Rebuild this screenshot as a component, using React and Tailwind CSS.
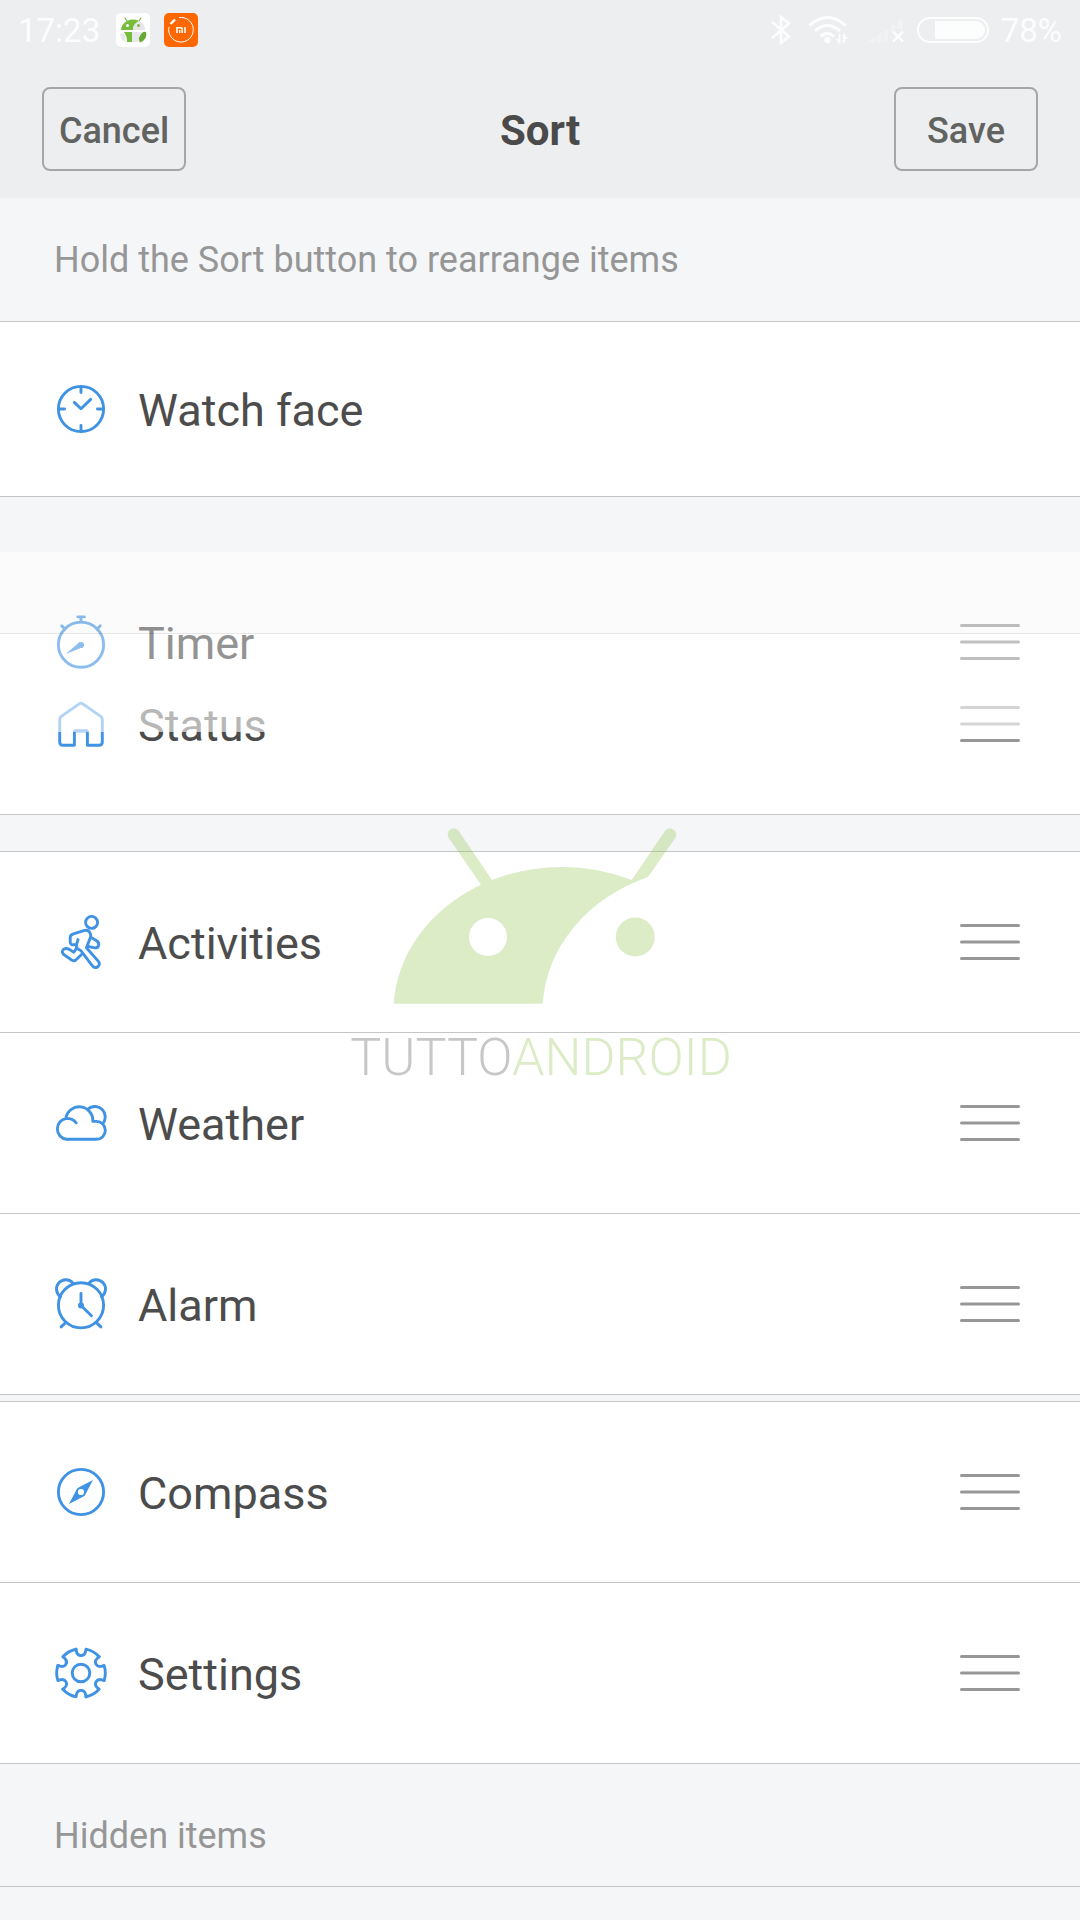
import { useState } from 'react';

function Icon({ children }) {
  return (
    <svg
      viewBox="0 0 54 54"
      fill="none"
      stroke="currentColor"
      strokeWidth="2.9"
      strokeLinecap="round"
      strokeLinejoin="round"
      className="w-[54px] h-[54px] shrink-0 text-[#4092e3]"
      aria-hidden="true"
    >
      {children}
    </svg>
  );
}

const icons = {
  watch: (
    <Icon>
      <circle cx="27" cy="27" r="22.6" />
      <path d="M27 4.5V10.6M27 49.5V43.4M4.5 27H10.6M49.5 27H43.4M20.3 20.4L27 26.8L36.7 17.4" />
    </Icon>
  ),
  timer: (
    <Icon>
      <circle cx="27" cy="29.7" r="22.6" />
      <path d="M23.8 1.9H30.4M27 2V7M7.7 10.8L11 14.3M46.3 10.8L43 14.3" />
      <path d="M11.7 39L25.4 27.2L28.8 32.3Z" fill="currentColor" stroke="none" />
      <circle cx="27" cy="29.9" r="3" fill="currentColor" stroke="none" />
    </Icon>
  ),
  status: (
    <Icon>
      <path d="M20.4 48.3H9q-3.3 0-3.3-3.3V22.5q0-2 1.6-3.1L25.2 6.9q1.8-1.3 3.6 0L46.7 19.4q1.6 1.1 1.6 3.1V45q0 3.3-3.3 3.3H33.4V35q0-1.3-1.3-1.3H21.7q-1.3 0-1.3 1.3Z" />
    </Icon>
  ),
  activities: (
    <Icon>
      <circle cx="37.6" cy="7.4" r="6" />
      <path d="M24 24.6C23.2 27.4 22.2 29.4 22.4 32.2C23.2 34.2 25.6 34.6 27.2 36L38 50.4C41.6 55.2 47.6 50.6 44.4 46.4L32.4 32.8L36.4 22.6C37.6 18.2 34.6 14.4 30.6 15.4L19.4 18.8Q16.4 19.8 16.2 22.2V27.2Q16.4 30.4 20.6 29.6" />
      <path d="M37.6 22.8L42.6 25.8C46.4 28.4 44.8 33.4 40.6 32.8L34 31.4" />
      <path d="M22.4 33.6L19.8 37.2L15.4 34.4C9.6 31.4 5.8 37 10.4 40L18 45.2Q20 46.4 21.8 45L28 39" />
    </Icon>
  ),
  weather: (
    <Icon>
      <path d="M11.8 22.3A13.6 13.6 0 0 1 38.8 25.4H42.4A8.9 8.9 0 0 1 42.4 43.3H12.8A10.5 10.5 0 0 1 12.8 22.4Q18.8 22.4 22.2 26.8" />
      <path d="M34.7 12.5A10.4 10.4 0 0 1 48.8 27.6" />
    </Icon>
  ),
  alarm: (
    <Icon>
      <circle cx="27" cy="28.3" r="22.6" />
      <path d="M6.6 19.8A9.3 9.3 0 1 1 19 6.2M47.4 19.8A9.3 9.3 0 1 0 35 6.2M7.1 49.9L11.4 45.9M46.9 49.9L42.6 45.9M27 16.4V28.5L37.5 38.8" />
      <circle cx="27" cy="28.5" r="3" fill="currentColor" stroke="none" />
    </Icon>
  ),
  compass: (
    <Icon>
      <circle cx="27" cy="27" r="22.6" />
      <path
        d="M39 15L31.4 29.6Q30.8 30.9 29.4 31.5L15 39L22.6 24.4Q23.2 23.1 24.6 22.5ZM27 23.9A3.1 3.1 0 1 0 27 30.1A3.1 3.1 0 1 0 27 23.9Z"
        fill="currentColor"
        fillRule="evenodd"
        stroke="none"
      />
    </Icon>
  ),
  settings: (
    <Icon>
      <circle cx="27" cy="27" r="8.8" />
      {[0, 60, 120, 180, 240, 300].map((angle) => (
        <path
          key={angle}
          d="M22 3.2L22.4 5.4C23 8.2 24.6 9.6 27 9.6S31 8.2 31.6 5.4L32 3.2A24.3 24.3 0 0 1 45.1 10.8"
          transform={`rotate(${angle} 27 27)`}
        />
      ))}
    </Icon>
  ),
};

const groups = [
  {
    id: 'main',
    gap: 'mt-[36px]',
    items: [
      { icon: 'activities', label: 'Activities' },
      { icon: 'weather', label: 'Weather' },
      { icon: 'alarm', label: 'Alarm' },
    ],
  },
  {
    id: 'more',
    gap: 'mt-[6px]',
    items: [
      { icon: 'compass', label: 'Compass' },
      { icon: 'settings', label: 'Settings' },
    ],
  },
];

function Row({ icon, label }) {
  return (
    <div className="flex items-center h-[180px] pl-[54px] pr-[60px]">
      {icons[icon]}
      <span className="ml-[30px] pt-1 flex-1 text-[45px] leading-[54px] text-[#4c4c4c]">{label}</span>
      <button type="button" aria-label={`Move ${label}`} className="cursor-grab">
        <svg viewBox="0 0 60 36" className="block w-[60px] h-[36px]" stroke="#979797" strokeWidth="3" strokeLinecap="round">
          <path d="M1.5 1.5H58.5M1.5 18H58.5M1.5 34.5H58.5" />
        </svg>
      </button>
    </div>
  );
}

function StatusBar() {
  return (
    <div className="flex items-center justify-between h-[60px] pl-[18px] pr-[18px] text-[33px] leading-[40px] text-[#fcfdfd]">
      <div className="flex items-center">
        <span className="pt-0.5">17:23</span>
        <svg viewBox="0 0 34 34" className="ml-[16px] w-[34px] h-[34px]" aria-hidden="true">
          <rect width="34" height="34" rx="5" fill="#fff" />
          <path d="M11 8L9 5M23 8L25 5" stroke="#74b93a" strokeWidth="1.2" strokeLinecap="round" />
          <path d="M5 17A12 10.5 0 0 1 23 8Q17 11 17 17Z" fill="#77bd3c" />
          <path d="M17 17Q17 11 23 8A10 10 0 0 1 29 17Z" fill="#e6e6e8" />
          <path d="M8 19H16V29H11Q11 23 8 19Z" fill="#77bd3c" />
          <path d="M16 19H26Q22 24 23 29H16ZM4 21Q8 19 9 24T10 29Q5 28 4 21Z" fill="#e9e9eb" />
          <path d="M30 19Q32 26 24 29.5Q21 25 26 20Q28 18 30 19Z" fill="#67aa33" />
          <circle cx="11.5" cy="12.5" r="1.5" fill="#fff" />
          <circle cx="22.5" cy="12.5" r="1.5" fill="#77bd3c" />
        </svg>
        <svg viewBox="0 0 34 34" className="ml-[14px] w-[34px] h-[34px]" fill="none" stroke="#fff" aria-hidden="true">
          <rect width="34" height="34" rx="5" fill="#ff6700" stroke="none" />
          <path d="M15 4.6A12.3 12.3 0 1 1 5 14" strokeWidth="1" />
          <path d="M6.5 11L11 6.5" strokeWidth="2.4" />
          <path d="M13 20V14.8H16.8Q18.2 14.8 18.2 16.2V20M15.7 17V20M21 14V20" strokeWidth="1.5" />
        </svg>
      </div>
      <div className="flex items-center">
        <svg viewBox="0 0 20 30" className="w-[20px] h-[30px]" fill="none" stroke="currentColor" strokeWidth="2.6" aria-hidden="true">
          <path d="M1 7L18 21.5L10 28V2L18 8.5L1 23" />
        </svg>
        <svg viewBox="0 0 40 30" className="ml-[17px] w-[40px] h-[30px]" fill="none" stroke="currentColor" strokeWidth="3" aria-hidden="true">
          <path d="M1.5 10.5Q19.5 -5.5 37.5 10.5M7 16Q19.5 5 32 16M12.5 21.5Q19.5 15.5 26 21.5" />
          <circle cx="19.5" cy="25" r="3.2" fill="currentColor" stroke="none" />
          <path d="M31.5 19V28.5M36 28V19" strokeWidth="1.8" />
          <path d="M27.5 24H32V29ZM35 18.5L40 24H35Z" fill="currentColor" stroke="none" />
        </svg>
        <svg viewBox="0 0 38 28" className="ml-[18px] w-[38px] h-[28px]" aria-hidden="true">
          <path
            d="M1 26L9 21V26ZM11 20L15.5 17V26H11ZM18 15L22 12.5V26H18ZM25 10L29 7V12L25 16ZM32 5L37 1V14L32 12Z"
            fill="#f1f3f3"
          />
          <path d="M27 15.5L37 25.5M37 15.5L27 25.5" stroke="currentColor" strokeWidth="2.4" />
        </svg>
        <svg viewBox="0 0 72 26" className="ml-[13px] w-[72px] h-[26px]" aria-hidden="true">
          <rect x="1" y="1" width="70" height="24" rx="12" fill="none" stroke="currentColor" strokeWidth="2" />
          <path d="M18 4H59A9 9 0 0 1 59 22H18Z" fill="currentColor" />
        </svg>
        <span className="ml-[12px] pt-0.5">78%</span>
      </div>
    </div>
  );
}

function Watermark() {
  return (
    <div className="absolute inset-x-0 top-[828px] pl-0.5 flex flex-col items-center opacity-30 pointer-events-none select-none">
      <svg viewBox="0 0 380 176" className="w-[380px] h-[176px]" fill="#8bc34a" aria-hidden="true">
        <path
          fillRule="evenodd"
          d="M42.7 175.7A169 145 0 0 1 130 56.7L97.8 10A6 6 0 0 1 107.7 3L141 52A169 145 0 0 1 280.7 52L313.8 3.2A6 6 0 0 1 324.2 10L297 49A169 145 0 0 0 191.7 175.7ZM137 90A19 19 0 1 0 137 128A19 19 0 1 0 137 90Z"
        />
        <circle cx="284.3" cy="109" r="19.5" />
      </svg>
      <p className="mt-[24px] text-[52px] leading-[60px] font-light text-[#4a4a4a]">
        TUTTO<span className="text-[#8bc34a]">ANDROID</span>
      </p>
    </div>
  );
}

export default function App() {
  const [saved, setSaved] = useState(false);

  return (
    <div className="relative min-h-screen overflow-hidden bg-[#f5f6f8] font-['Roboto',sans-serif]">
      <header className="bg-[#edeef0]">
        <StatusBar />
        <div className="flex items-center justify-between h-[138px] px-[42px]">
          <button
            type="button"
            onClick={() => setSaved(false)}
            className="w-[144px] h-[84px] pt-1 border-2 border-[#a5a6a7] rounded-lg text-[36px] leading-[42px] font-medium text-[#616361]"
          >
            Cancel
          </button>
          <h1 className="pt-1 text-[42px] leading-[48px] font-bold text-[#4a4a4a]">Sort</h1>
          <button
            type="button"
            aria-pressed={saved}
            onClick={() => setSaved(true)}
            className="w-[144px] h-[84px] pt-1 border-2 border-[#a5a6a7] rounded-lg text-[36px] leading-[42px] font-medium text-[#616361]"
          >
            Save
          </button>
        </div>
      </header>

      <main>
        <p className="flex items-center h-[123px] px-[54px] text-[36px] leading-[42px] text-[#969696]">
          Hold the Sort button to rearrange items
        </p>

        <div className="flex items-center h-[176px] pl-[54px] bg-white border-y border-[#c4c5c6]">
          {icons.watch}
          <span className="ml-[30px] pt-1 text-[45px] leading-[54px] text-[#4c4c4c]">Watch face</span>
        </div>

        <div className="relative mt-[136px] bg-white border-y border-[#c4c5c6]">
          <Row icon="status" label="Status" />
          {/* row being dragged */}
          <div className="absolute inset-x-0 -top-[82px] bg-white opacity-60">
            <Row icon="timer" label="Timer" />
          </div>
        </div>

        {groups.map((group) => (
          <ul key={group.id} className={`${group.gap} bg-white border-y border-[#c4c5c6] divide-y divide-[#c4c5c6]`}>
            {group.items.map((item) => (
              <li key={item.label}>
                <Row icon={item.icon} label={item.label} />
              </li>
            ))}
          </ul>
        ))}

        <h2 className="h-[123px] px-[54px] pt-[51px] text-[36px] leading-[42px] text-[#969696] border-b border-[#c4c5c6]">
          Hidden items
        </h2>
      </main>

      <Watermark />
    </div>
  );
}
